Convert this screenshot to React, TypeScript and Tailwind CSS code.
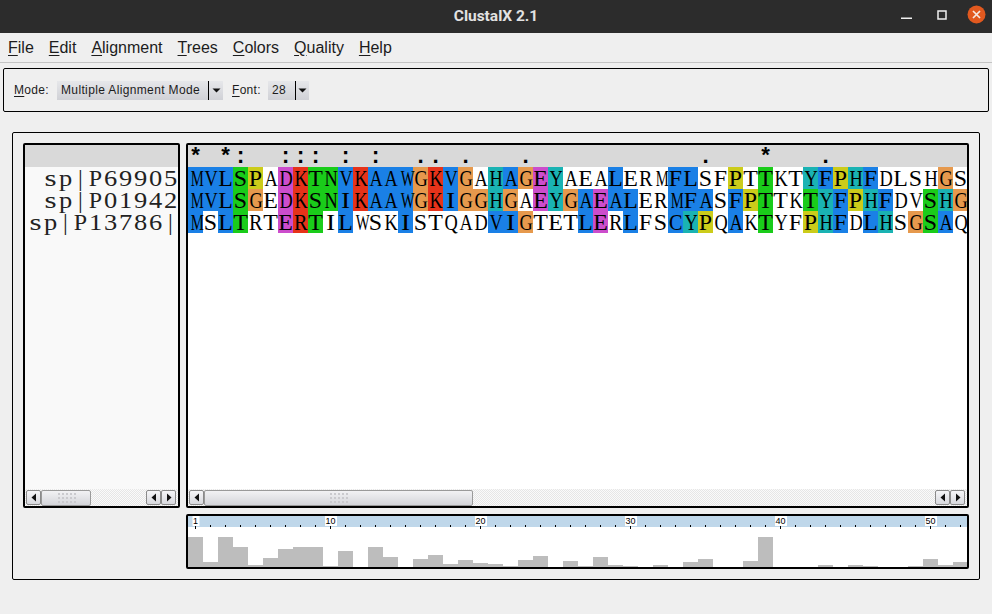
const rows = [
  { seq: 'MVLSPADKTNVKAAWGKVGAHAGEYAEALERMFLSFPTTKTYFPHFDLSHGS', colors: 'BBBGY_MRGGBRBBBORBO_CBOMC___B___BB__Y_G__CBYCB____O_' },
  { seq: 'MVLSGEDKSNIKAAWGKIGGHGAEYGAEALERMFASFPTTKTYFPHFDVSHG', colors: 'BBBGO_MRGGBRBBBORBOOCO_MCOBMBB__BBB_BYG__GCBYCB__GCO' },
  { seq: 'MSLTRTERTILWSKISTQADVIGTETLERLFSCYPQAKTYFPHFDLHSGSAQ', colors: 'B_BG__MRG_B___B_____BBO___BM_B__BCY_B_G__YCB_BC_OGB_' },
];

const names = ['sp|P69905', 'sp|P01942', 'sp|P13786|'];
const marks = '* *:  ::: : :  .. .   .           .   *   .         ';
const quality = [30, 5, 30, 20, 2, 9, 18, 20, 20, 1, 16, 0, 20, 10, 0, 8, 12, 3, 7, 4, 3, 1, 7, 11, 0, 6, 1, 10, 2, 1, 0, 2, 0, 5, 8, 0, 0, 6, 30, 0, 0, 0, 2, 0, 2, 1, 0, 0, 1, 8, 2, 5];

const cellColors: Record<string, string> = {
  B: 'bg-[#1a80e6]',
  G: 'bg-[#1acc1a]',
  R: 'bg-[#e6331a]',
  M: 'bg-[#cc4dcc]',
  Y: 'bg-[#cccc1a]',
  C: 'bg-[#1ab3b3]',
  O: 'bg-[#e6994d]',
  _: 'bg-white',
};

// the font is proportional, so each letter gets its own stretch to fill the 15px cell
function glyphScale(c: string) {
  if (c === 'M' || c === 'W') return 'scale-x-[0.64]';
  if ('AVKHDGQNY'.includes(c)) return 'scale-x-[0.8]';
  if (c === 'C' || c === 'R') return 'scale-x-[0.88]';
  if (c === 'I') return 'scale-x-[1.2]';
  if (c === 's') return 'scale-x-[1.35]';
  if (c === 'p') return 'scale-x-[1.15]';
  if ('0123456789'.includes(c)) return 'scale-x-[1.15]';
  return 'scale-x-[1.04]';
}

function Glyph({ c }: { c: string }) {
  return <span className={`inline-block w-[15px] origin-center text-center ${glyphScale(c)}`}>{c}</span>;
}

function Arrow({ dir }: { dir: 'left' | 'right' }) {
  return (
    <button className="flex h-[15px] w-[15px] items-center justify-center rounded-[2px] border border-[#8a8a8a] bg-gradient-to-b from-[#f6f6f8] to-[#d8d9de]">
      <svg width="6" height="9" viewBox="0 0 6 9">
        <path d={dir === 'left' ? 'M5 0.5V8.5L0.5 4.5Z' : 'M1 0.5V8.5L5.5 4.5Z'} fill="#111" />
      </svg>
    </button>
  );
}

function Grip() {
  return (
    <svg width="19" height="11" viewBox="0 0 19 11">
      {[1, 5, 9].map(y =>
        [1, 5, 9, 13, 17].map(x => <rect key={`${x}-${y}`} x={x} y={y} width="2" height="2" fill="#cacace" />),
      )}
    </svg>
  );
}

function Scrollbar({ thumb }: { thumb: string }) {
  return (
    <div className="flex h-[17px] items-center bg-[repeating-conic-gradient(#e6e6e6_0_25%,#fafafa_0_50%)] bg-[length:2px_2px] pl-px pr-[2px]">
      <Arrow dir="left" />
      <div className={`flex h-[16px] items-center justify-center rounded-[2px] border border-[#9a9a9a] bg-gradient-to-b from-[#f2f2f4] to-[#d4d5da] ${thumb}`}>
        <Grip />
      </div>
      <div className="flex-1" />
      <Arrow dir="left" />
      <Arrow dir="right" />
    </div>
  );
}

function Mnemonic({ first, rest }: { first: string; rest: string }) {
  return (
    <span>
      <span className="underline underline-offset-2">{first}</span>
      {rest}
    </span>
  );
}

function Combo({ label, width, textWidth }: { label: string; width: string; textWidth: string }) {
  return (
    <div className={`flex h-[19px] items-center bg-gradient-to-b from-[#e6e7ea] to-[#d0d1d6] ${width}`}>
      <span className={`pl-1 tracking-[0.36px] ${textWidth}`}>{label}</span>
      <div className="h-full w-px bg-black" />
      <div className="flex flex-1 items-center justify-center">
        <svg width="9" height="5" viewBox="0 0 9 5">
          <path d="M0.5 0.5H8.5L4.5 4.5Z" fill="#111" />
        </svg>
      </div>
    </div>
  );
}

export default function App() {
  return (
    <div className="flex h-[614px] w-[992px] flex-col overflow-hidden bg-[#efefef] font-['Liberation_Sans',sans-serif] text-[#1c1c1c]">
      {/* Title bar */}
      <div className="grid h-[33px] grid-cols-[1fr_auto_1fr] items-center bg-[#2c2c2c]">
        <div />
        <div className="font-['Roboto',sans-serif] text-[15.5px] font-bold text-[#e2e2e2]">ClustalX 2.1</div>
        <div className="flex items-center justify-end">
          <svg width="12" height="12" viewBox="0 0 12 12" className="mr-[24px] -translate-y-[2px]">
            <rect x="0" y="8.5" width="11" height="1.5" fill="#f0f0f0" />
          </svg>
          <svg width="10" height="10" viewBox="0 0 10 10" className="mr-[20px] -translate-y-[2px]">
            <rect x="1" y="1" width="8" height="8" fill="none" stroke="#f0f0f0" strokeWidth="1.5" />
          </svg>
          <svg width="19" height="19" viewBox="0 0 19 19" className="mr-[6px] -translate-y-[2px]">
            <circle cx="9.5" cy="9.5" r="9" fill="#e2591f" />
            <path d="M6 6L13 13M13 6L6 13" stroke="#f6e9e2" strokeWidth="1.7" />
          </svg>
        </div>
      </div>

      {/* Menu */}
      <div className="flex h-[30px] items-center gap-[15px] border-b border-[#c4c4c4] pl-2 text-[16px]">
        <Mnemonic first="F" rest="ile" />
        <Mnemonic first="E" rest="dit" />
        <Mnemonic first="A" rest="lignment" />
        <Mnemonic first="T" rest="rees" />
        <Mnemonic first="C" rest="olors" />
        <Mnemonic first="Q" rest="uality" />
        <Mnemonic first="H" rest="elp" />
      </div>

      {/* Toolbar */}
      <div className="mx-[3px] mt-[5px] flex h-[44px] w-[986px] items-center rounded-[2px] border border-black pl-[10px] text-[12px]">
        <span className="w-[43px] tracking-[0.3px]">
          <Mnemonic first="M" rest="ode:" />
        </span>
        <Combo label="Multiple Alignment Mode" width="w-[166px]" textWidth="w-[151px]" />
        <span className="ml-[9px] w-[36px] tracking-[0.3px]">
          <Mnemonic first="F" rest="ont:" />
        </span>
        <Combo label="28" width="w-[41px]" textWidth="w-[27px]" />
      </div>

      {/* Main panel */}
      <div className="ml-3 mt-[20px] flex h-[448px] w-[968px] flex-col gap-[6px] rounded-[2px] border border-black pl-[10px] pt-[10px]">
        <div className="flex gap-[6px]">
          {/* Names */}
          <div className="flex h-[365px] w-[157px] flex-col overflow-hidden rounded-[2px] border-2 border-black bg-[#f9f9f9]">
            <div className="h-[22px] shrink-0 bg-[#d9d9d9]" />
            <div className="flex-1 font-['Liberation_Serif',serif] text-[23px] leading-[22px] text-[#222]">
              {names.map(name => (
                <div key={name} className="flex h-[22px] justify-end pt-px">
                  {name.split('').map((c, i) => (
                    <Glyph key={i} c={c} />
                  ))}
                </div>
              ))}
            </div>
            <Scrollbar thumb="w-[50px]" />
          </div>

          {/* Alignment */}
          <div className="flex h-[365px] w-[783px] flex-col overflow-hidden rounded-[2px] border-2 border-black bg-white">
            <div className="flex h-[22px] shrink-0 bg-[#d9d9d9] font-['Liberation_Mono',monospace] text-[22px] font-bold leading-[22px] text-black">
              {marks.split('').map((m, i) => (
                <span key={i} className="h-[22px] w-[15px] shrink-0 pt-[2px] text-center">
                  {m}
                </span>
              ))}
            </div>
            <div className="flex-1 overflow-hidden font-['Liberation_Serif',serif] text-[23px] leading-[22px] text-black">
              {rows.map(row => (
                <div key={row.seq} className="flex h-[22px]">
                  {row.seq.split('').map((c, i) => (
                    <span key={i} className={`h-[22px] w-[15px] shrink-0 pt-px ${cellColors[row.colors[i]]}`}>
                      <Glyph c={c} />
                    </span>
                  ))}
                </div>
              ))}
            </div>
            <Scrollbar thumb="w-[269px]" />
          </div>
        </div>

        {/* Quality */}
        <div className="ml-[163px] flex h-[55px] w-[783px] flex-col overflow-hidden rounded-[2px] border-2 border-black bg-white">
          <div className="flex h-[11px] shrink-0 bg-[#bfd7ea]">
            {quality.map((_, i) => {
              const labelled = i === 0 || (i + 1) % 10 === 0;
              return (
                <div key={i} className="relative flex w-[15px] shrink-0 justify-center">
                  {labelled && (
                    <span className="absolute left-1/2 top-0 -translate-x-1/2 bg-white px-px text-[9px] leading-[10px] text-black">
                      {i + 1}
                    </span>
                  )}
                  <div className={labelled ? 'absolute top-[10px] h-[3px] w-px bg-black' : 'absolute top-[9px] h-[2px] w-px bg-black'} />
                </div>
              );
            })}
          </div>
          <div className="flex flex-1 items-end">
            {quality.map((h, i) => (
              <div key={i} className="w-[15px] shrink-0 bg-[#bdbdbd]" style={{ height: h }} />
            ))}
          </div>
        </div>
      </div>
    </div>
  );
}
